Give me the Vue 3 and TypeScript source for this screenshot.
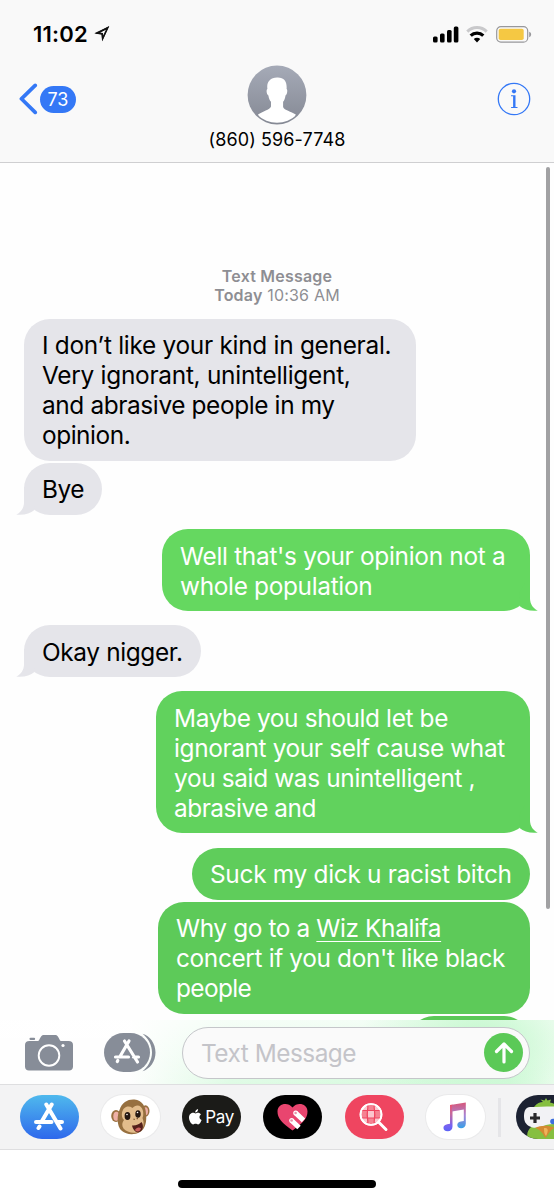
<template>
  <div class="phone">
    <header class="header">
      <div class="status-bar">
        <div class="clock">
          <span class="time">11:02</span>
          <svg class="location" width="16" height="16" viewBox="0 0 16 16">
            <path d="M13.6 1.800 8.600 12.400 8.200 7.700 3.400 7.200Z" fill="none" stroke="#111" stroke-width="1.500" />
            <path d="M15.200.3 8.300 15.300 7.600 8.600.3 7.200Z M13 3 5.500 6.800 8.900 7.100 9.300 10.800Z" fill="#111" fill-rule="evenodd" />
          </svg>
        </div>
        <div class="indicators">
          <svg width="26" height="17" viewBox="0 0 26 17">
            <rect x="0" y="10.5" width="4.6" height="6" rx="1.5" />
            <rect x="7" y="7.5" width="4.6" height="9" rx="1.5" />
            <rect x="14" y="4" width="4.6" height="12.5" rx="1.5" />
            <rect x="20.8" y="0.5" width="4.6" height="16" rx="1.5" />
          </svg>
          <svg class="wifi" width="22" height="17" viewBox="0 0 22 17">
            <path d="M1.3 5.600a13.800 13.800 0 0 1 19.400 0" fill="none" stroke="#c9c9cb" stroke-width="3" />
            <path d="M4.700 9.600a9 9 0 0 1 12.600 0" fill="none" stroke="#000" stroke-width="3.200" />
            <path d="M7.800 13.100a4.600 4.600 0 0 1 6.400 0L11 16.400Z" />
          </svg>
          <svg class="battery" width="36" height="17" viewBox="0 0 36 17">
            <rect x=".7" y=".7" width="31" height="15.4" rx="4.2" fill="none" stroke="#98989b" stroke-width="1.2" />
            <rect x="2.7" y="2.8" width="25" height="11.2" rx="1.8" fill="#f5c843" />
            <path d="M33.2 5.8c2.6.9 2.6 4.5 0 5.4Z" fill="#98989b" />
          </svg>
        </div>
      </div>

      <div class="nav">
        <div class="back">
          <svg width="19" height="32" viewBox="0 0 19 32">
            <path d="M16.2 2.4 2.4 15.8 16.2 29.4" fill="none" stroke="#3478f6" stroke-width="3.7" stroke-linecap="round" stroke-linejoin="round" />
          </svg>
          <span class="unread">73</span>
        </div>
        <div class="contact">
          <svg width="60" height="60" viewBox="0 0 60 60">
            <defs>
              <linearGradient id="avatar" x1="0" y1="0" x2="0" y2="1">
                <stop offset="0" stop-color="#a5aab7" />
                <stop offset="1" stop-color="#858994" />
              </linearGradient>
              <clipPath id="avatarClip"><circle cx="30" cy="30" r="27.8" /></clipPath>
            </defs>
            <circle cx="30" cy="30" r="29.4" fill="url(#avatar)" />
            <path clip-path="url(#avatarClip)" fill="#fff" d="M30 12.500c7-.4 10.200 3.700 9.600 11.500 1.300.7.600 5.500-1.100 6.400-.4 3-1.200 5-2.400 6.300v5.300c1.200 3.600 8 4.200 12.700 7.500L45 60H15l-4-10.400c4.500-3.400 11.800-4.500 13-8.100v-4.800c-1.200-1.300-2.200-3.500-2.600-6.300-1.900-.9-2.400-5.700-1-6.400-1-6.600 2.400-11.300 9.600-11.500Z" />
          </svg>
          <span class="number">(860) 596-7748</span>
        </div>
        <svg class="info" width="34" height="34" viewBox="0 0 34 34">
          <circle cx="17" cy="17" r="15.7" fill="none" stroke="#3478f6" stroke-width="1.3" />
          <circle cx="17" cy="9.3" r="2.1" fill="#3478f6" />
          <path d="M14 13.3h4.5V25h2v1h-6.4v-1h2V14.3H14Z" fill="#3478f6" />
        </svg>
      </div>
    </header>

    <main class="thread">
      <div class="stamp">
        <strong>Text Message</strong>
        <span><strong>Today</strong> 10:36 AM</span>
      </div>

      <div
        v-for="(message, index) in messages"
        :key="index"
        :class="['bubble', message.sent ? 'sent' : 'received', { spaced: message.spaced }]"
        :style="{ width: message.width + 'px', backgroundColor: message.color }"
      >
        <div v-for="line in message.lines" :key="line.text" class="line" :style="{ letterSpacing: line.spacing + 'px' }">
          <template v-if="line.link">{{ line.text }}<span class="link">{{ line.link }}</span></template>
          <template v-else>{{ line.text }}</template>
        </div>
        <svg v-if="message.tail" class="tail" width="20" height="28" viewBox="0 0 20 28">
          <path d="M0 10 6 0H11V16C11.300 21 14 25.500 18.800 27.600 11 28.400 5 26.700.5 23Z" :fill="message.color" />
        </svg>
      </div>
      <div class="scrollbar"></div>
    </main>

    <section class="composer">
      <svg class="camera" width="48" height="37" viewBox="0 0 48 37">
        <path fill="#878d98" d="M4.5 7H13c1.8 0 2.2-6 5.5-6h12c3.3 0 3.7 6 5.5 6h7.5C46.5 7 48 8.5 48 11v21.5c0 2.5-1.5 4-4 4H4c-2.5 0-4-1.5-4-4V11c0-2.500 1.500-4 4.500-4Z" />
        <rect x="4.5" y="3.7" width="5.6" height="2.2" rx="1" fill="#878d98" />
        <circle cx="24" cy="21.5" r="10.3" fill="none" stroke="#fff" stroke-width="1.9" />
        <circle cx="38" cy="11.5" r="1.6" fill="#fff" />
      </svg>
      <svg class="drawer" width="52" height="39" viewBox="0 0 52 39">
        <path d="M38.5.8C46 3 51.5 10.500 51.500 19.500S46 36 38.500 38.200C44 34 48 27 48 19.500S44 5 38.500.8Z" fill="#878d98" />
        <rect x="0" y="0" width="46" height="39" rx="19.5" fill="#878d98" />
        <g fill="none" stroke="#fff" stroke-width="3.200" stroke-linecap="round">
          <path d="M20.500 8 33.500 29M25 8 16 23.500M11.500 24H24.500M29.500 24H34.500M13.800 27.500 13.300 28.500" />
        </g>
      </svg>
      <div class="field">
        <span class="placeholder">Text Message</span>
        <span class="send">
          <svg width="20" height="22" viewBox="0 0 20 22">
            <path d="M10 20V2.5M2.500 9.500 10 2 17.500 9.500" fill="none" stroke="#fff" stroke-width="3.2" stroke-linecap="round" stroke-linejoin="round" />
          </svg>
        </span>
      </div>
    </section>

    <nav class="apps">
      <span class="app store">
        <svg width="32" height="30" viewBox="0 0 32 30">
          <path d="M13.3 2.5 27.5 26.5M18.7 2.5 9 19M3 20H18.5M24 20H29M6.5 24.5 5.5 26" fill="none" stroke="#fff" stroke-width="4" stroke-linecap="round" />
        </svg>
      </span>
      <span class="app white">
        <svg width="39" height="36" viewBox="0 0 39 36">
          <ellipse cx="5" cy="17" rx="4.800" ry="6" fill="#9a7040" />
          <ellipse cx="5.300" cy="17.300" rx="3" ry="4.500" fill="#eeb0a6" />
          <ellipse cx="34.500" cy="12" rx="4" ry="5.800" fill="#9a7040" />
          <ellipse cx="34.500" cy="12.300" rx="2.500" ry="4" fill="#eeb0a6" />
          <path d="M8.500 11C11 3 17 0 23.500.5 31 1 35 8 35 15c1 8-1 15-6 18-6 3.500-14 2.500-18-1C6 28 5.500 18 8.500 11Z" fill="#97703f" />
          <path d="M11 14c1-6 6-8 10.500-5C25 4.500 31 6 32 12c.5 3 .3 5-.5 7 2 5 1.500 11-3 13.500-5 2.500-13 1-16-3-2-3-1.500-6 .5-8.500-2-2-2.500-4.500-2-7Z" fill="#e3bd8c" />
          <ellipse cx="16.500" cy="17" rx="2.900" ry="3.900" fill="#241710" />
          <ellipse cx="27" cy="15" rx="2.700" ry="3.800" fill="#241710" />
          <circle cx="16" cy="15.500" r=".8" fill="#fff" />
          <circle cx="26.500" cy="13.500" r=".8" fill="#fff" />
          <path d="M22.500 20 23.700 20.500M26.800 19.200 25.700 20" stroke="#704825" stroke-width="1.200" />
          <path d="M21 26.500c4 .3 7-1 9.500-3.500 3 4 1.200 9.800-3 10.300-3.500.2-5.500-2.800-6.500-6.800Z" fill="#54201b" />
          <path d="M24 31c1-2.500 4.500-3.500 6-1.500-1 3.500-4 4-6 1.500Z" fill="#c9625d" />
        </svg>
      </span>
      <span class="app dark pay">
        <svg width="13" height="16" viewBox="0 0 13 16">
          <path fill="#fff" d="M9.1 0c.2 1.7-1.2 3.5-2.9 3.5C6 1.9 7.5.2 9.1 0ZM11.9 5.4c-2.2 1.5-1.7 4.5.7 5.5-.7 2-2 4.4-3.5 4.5-1 0-1.3-.6-2.5-.6s-1.6.6-2.5.6C2.3 15.3 0 11.6 0 8.7c0-4.4 3.7-5.6 5.5-4.6.9.5 1.3.4 2.3 0 1.6-.6 3.2-.1 4.1 1.3Z" />
        </svg>
        <span>Pay</span>
      </span>
      <span class="app dark">
        <svg width="31" height="29" viewBox="0 0 31 29">
          <path d="M15.500 27.500C5 20 .5 15 .5 8.500.5.8 10.500-1.500 15.500 4.500 20.500-1.500 30.500.8 30.500 8.500c0 6.500-4.500 11.500-15 19Z" fill="#e9456f" />
          <g fill="none" stroke="#fff" stroke-width="5">
            <path d="M18.800 10.200 26.500 17.300M14.800 17.700 22 24.500" />
          </g>
          <circle cx="18.700" cy="10.100" r="2.500" fill="#fff" />
          <circle cx="14.700" cy="17.600" r="2.500" fill="#fff" />
          <circle cx="18.600" cy="10" r="1.300" fill="#e994ab" />
          <circle cx="14.600" cy="17.500" r="1.300" fill="#e994ab" />
        </svg>
      </span>
      <span class="app search">
        <svg width="30" height="30" viewBox="0 0 30 30">
          <circle cx="12" cy="12.5" r="10.5" fill="#f58292" stroke="#fff" stroke-width="1.7" />
          <path d="M9 8.5h6V16H9ZM4 4.5h5v4H4ZM15 4.5h5v4h-5ZM3 16h6v4H3ZM15 16h6v4h-6Z" fill="#fff" opacity=".55" />
          <path d="M9 3c-1 6-1 13 0 19M15 3c1 6 1 13 0 19M2.5 8.500h19M2.500 16h19" fill="none" stroke="#ef4560" stroke-width="1.2" />
          <circle cx="12" cy="12.500" r="10.500" fill="none" stroke="#fff" stroke-width="1.700" />
          <path d="M20 20.5 27 27.5" stroke="#fff" stroke-width="3" stroke-linecap="round" />
        </svg>
      </span>
      <span class="app white">
        <svg width="24" height="30" viewBox="0 0 24 30">
          <defs>
            <linearGradient id="note" x1="0" y1="0" x2="0" y2="1">
              <stop offset="0" stop-color="#e8536f" />
              <stop offset=".35" stop-color="#c66a9e" />
              <stop offset=".8" stop-color="#7563f3" />
              <stop offset="1" stop-color="#5b62f6" />
            </linearGradient>
            <linearGradient id="noteRight" x1="0" y1="0" x2="0" y2="1">
              <stop offset="0" stop-color="#d75779" />
              <stop offset=".5" stop-color="#a783d4" />
              <stop offset="1" stop-color="#36a0e8" />
            </linearGradient>
          </defs>
          <path d="M7 3 9.500 2.600V24.500c0 3-2 4.800-4.700 4.800C1.800 29.300.5 27.800.5 26c0-2.500 2-3.700 6.500-4.200Z" fill="url(#note)" />
          <path d="M9 2.700 22.800.5V21.500c0 3-2 4.800-4.700 4.800-2.500 0-3.800-1.500-3.800-3.300 0-2.500 2-3.500 6.500-4V7.500L9 9.500Z" fill="url(#noteRight)" />
        </svg>
      </span>
      <span class="divider"></span>
      <span class="app game">
        <svg width="59" height="44" viewBox="0 0 59 44">
          <rect width="59" height="44" fill="#1c2233" />
          <path d="M12 44c-2-5 0-9 3-12l3-20c3-4 6-5 9-5l-2.500-2.500 4 1L30 3l1.500 2.500L35 4.500l-1 3c8 1.500 11 7 12 12l5 24.500Z" fill="#86bf40" />
          <path d="M8 21c0-6 2-8.500 6-9 10 0 24-1 34 0 5 3 7 16 4 20-7-3-14-4-22-2-5 2.500-12 4-16 1.500C9.500 29.500 8 26 8 21Z" fill="#f2f2f5" />
          <path d="M19 18v10M14 23h10" stroke="#28282b" stroke-width="3.200" />
          <circle cx="37" cy="26.500" r="2.800" fill="#3c6fdd" />
          <path d="M19 33c6-3 14-3 20 0-4 1-6 5-9.500 10C27 39 25 35 19 33Z" fill="#d48a31" />
          <path d="M28 33c4-.5 5 2 2 8-2-2-2-5-2-8Z" fill="#efb35a" />
        </svg>
      </span>
    </nav>

    <footer class="home">
      <div class="home-bar"></div>
    </footer>
  </div>
</template>

<script setup lang="ts">
interface Line {
  text: string;
  spacing: number;
  link?: string;
}

interface Message {
  sent: boolean;
  width: number;
  color: string;
  lines: Line[];
  tail?: boolean;
  spaced?: boolean;
}

const GRAY = '#e5e5ea';

const messages: Message[] = [
  {
    sent: false,
    width: 392,
    color: GRAY,
    lines: [
      { text: 'I don’t like your kind in general.', spacing: -0.28 },
      { text: 'Very ignorant, unintelligent,', spacing: -0.27 },
      { text: 'and abrasive people in my', spacing: -0.38 },
      { text: 'opinion.', spacing: -0.45 }
    ]
  },
  { sent: false, width: 78, color: GRAY, tail: true, lines: [{ text: 'Bye', spacing: -0.5 }] },
  {
    sent: true,
    width: 368,
    color: '#65d860',
    tail: true,
    spaced: true,
    lines: [
      { text: 'Well that\'s your opinion not a', spacing: -0.3 },
      { text: 'whole population', spacing: -0.32 }
    ]
  },
  { sent: false, width: 177, color: GRAY, tail: true, spaced: true, lines: [{ text: 'Okay nigger.', spacing: -0.36 }] },
  {
    sent: true,
    width: 374,
    color: '#61d25d',
    tail: true,
    spaced: true,
    lines: [
      { text: 'Maybe you should let be', spacing: -0.37 },
      { text: 'ignorant your self cause what', spacing: -0.37 },
      { text: 'you said was unintelligent ,', spacing: -0.35 },
      { text: 'abrasive and', spacing: -0.48 }
    ]
  },
  { sent: true, width: 338, color: '#5fcd5b', spaced: true, lines: [{ text: 'Suck my dick u racist bitch', spacing: -0.29 }] },
  {
    sent: true,
    width: 372,
    color: '#5dca59',
    lines: [
      { text: 'Why go to a ', link: 'Wiz Khalifa', spacing: -0.38 },
      { text: 'concert if you don\'t like black', spacing: -0.36 },
      { text: 'people', spacing: -0.6 }
    ]
  },
  { sent: true, width: 122, color: '#5bc857', lines: [] }
];
</script>

<style>
body {
  margin: 0;
  background: #fff;
}
</style>

<style scoped>
.phone {
  display: flex;
  flex-direction: column;
  width: 554px;
  height: 1200px;
  overflow: hidden;
  background: #fefefe;
  color: #000;
  font-family: Inter, "Liberation Sans", sans-serif;
}

.phone svg {
  display: block;
  flex: none;
}

.header {
  box-sizing: border-box;
  flex: none;
  height: 163px;
  border-bottom: 1px solid #cfcfd1;
  background: #f9f9f9;
}

.status-bar {
  display: flex;
  align-items: center;
  justify-content: space-between;
  height: 65px;
  padding: 3px 22px 0 33px;
  box-sizing: border-box;
}

.clock,
.indicators {
  display: flex;
  align-items: center;
}

.time {
  font-size: 22px;
  font-weight: 600;
  letter-spacing: 0.2px;
}

.location {
  margin-left: 6px;
}

.wifi {
  margin-left: 7px;
}

.battery {
  margin-left: 8px;
}

.nav {
  display: grid;
  grid-template-columns: 1fr auto 1fr;
  height: 97px;
  padding: 0 23px;
}

.back {
  display: flex;
  align-items: center;
  gap: 2px;
  height: 68px;
  margin-left: -4px;
}

.unread {
  width: 36px;
  height: 27px;
  border-radius: 14px;
  background: #3478f6;
  color: #fff;
  font-size: 18px;
  line-height: 27px;
  text-align: center;
}

.contact {
  display: flex;
  flex-direction: column;
  align-items: center;
}

.number {
  margin-top: 4px;
  font-size: 18px;
  letter-spacing: 0.1px;
  line-height: 22px;
  white-space: nowrap;
}

.info {
  margin-top: 17px;
  justify-self: end;
}

.thread {
  position: relative;
  display: flex;
  flex: none;
  flex-direction: column;
  gap: 2.1px;
  height: 857px;
  overflow: hidden;
  padding: 104px 24px 0;
  box-sizing: border-box;
}

.stamp {
  display: flex;
  flex: none;
  flex-direction: column;
  align-items: center;
  height: 50px;
  color: #8e8e93;
  font-size: 16px;
  letter-spacing: 0.2px;
  line-height: 19px;
}

.stamp strong {
  font-weight: 600;
}

.bubble {
  position: relative;
  box-sizing: border-box;
  flex: none;
  min-height: 52px;
  padding: 11.3px 18px 10.7px;
  border-radius: 26px;
  font-size: 24.4px;
  line-height: 30px;
  white-space: pre;
}

.spaced {
  margin-top: 12px;
}

.sent {
  align-self: flex-end;
  color: #fff;
}

.link {
  text-decoration: underline;
  text-decoration-thickness: 1px;
  text-underline-offset: 4px;
}

.tail {
  position: absolute;
  right: -9px;
  bottom: 0;
}

.received .tail {
  right: auto;
  left: -9px;
  transform: scaleX(-1);
}

.scrollbar {
  position: absolute;
  top: 4px;
  right: 4px;
  width: 4px;
  height: 742px;
  border-radius: 2px;
  background: #a1a1a3;
}

.composer {
  display: flex;
  flex: none;
  align-items: center;
  box-sizing: border-box;
  height: 64px;
  padding: 1px 24px 0 25px;
  background:
    radial-gradient(ellipse 120px 80px at 480px 20px, #c5f8ce 0%, rgba(197, 248, 206, 0) 100%),
    linear-gradient(to bottom, rgba(255, 255, 255, 0.7), rgba(255, 255, 255, 0)),
    linear-gradient(to right, #fefefe 130px, #dffbe5 230px, #d5fadd 510px, #effdf1 554px);
}

.drawer {
  margin-left: 31px;
}

.field {
  display: flex;
  flex: 1;
  align-items: center;
  justify-content: space-between;
  box-sizing: border-box;
  height: 52px;
  margin-left: 26px;
  padding: 0 6px 0 18px;
  border: 1px solid #c5c6ca;
  border-radius: 26px;
  background: #fafafa;
}

.placeholder {
  padding-top: 1px;
  color: #c4c4c9;
  font-size: 24.4px;
  letter-spacing: -0.5px;
}

.send {
  display: flex;
  align-items: center;
  justify-content: center;
  width: 39px;
  height: 39px;
  border-radius: 50%;
  background: #5bc957;
}

.apps {
  display: flex;
  flex: none;
  align-items: center;
  gap: 22.3px;
  box-sizing: border-box;
  height: 66px;
  padding-left: 19.5px;
  border-top: 1px solid #dedee0;
  border-bottom: 1px solid #dedee0;
  background: #f3f3f4;
}

.app {
  display: flex;
  flex: none;
  align-items: center;
  justify-content: center;
  width: 59px;
  height: 44px;
  border-radius: 22px;
  overflow: hidden;
}

.store {
  background: linear-gradient(#4fb9ed, #2e68ec);
}

.white {
  background: #fff;
  box-shadow: 0 0 0 1px #eaeaeb;
}

.dark {
  background: #000;
}

.pay {
  gap: 3px;
  background: #1b1b18;
  color: #fff;
  font-size: 17px;
  letter-spacing: -0.3px;
}

.search {
  background: #ef4560;
}

.divider {
  flex: none;
  width: 3px;
  height: 39px;
  margin: 0 -8px -1px -9px;
  background: #e5e5e8;
}

.home {
  display: flex;
  flex: 1;
  align-items: flex-end;
  justify-content: center;
  padding-bottom: 12px;
  background: #fff;
}

.home-bar {
  width: 198px;
  height: 8px;
  border-radius: 4px;
  background: #000;
}
</style>
